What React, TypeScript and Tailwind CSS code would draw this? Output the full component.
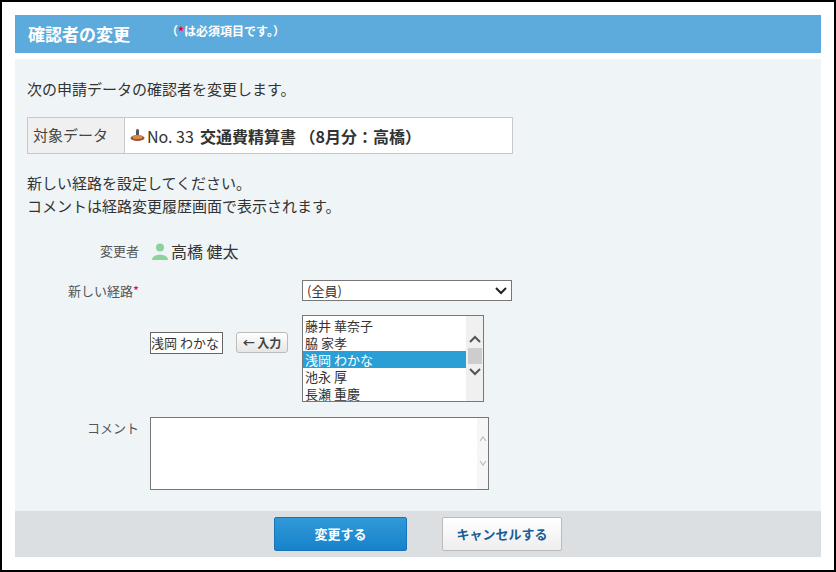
export default function App() {
  const people = ["藤井 華奈子", "脇 家孝", "浅岡 わかな", "池永 厚", "長瀬 重慶"];
  return (
    <div className="w-[836px] h-[572px] border-2 border-black bg-white relative overflow-hidden text-[#333] text-[15px]" style={{ fontFamily: '"Noto Sans CJK JP", "Noto Sans", sans-serif' }}>
      <div className="absolute left-[13px] top-[13px] w-[806px]">
        <div className="h-[38px] bg-[#5dabdc] flex items-center px-[13px] text-white">
          <span className="font-bold text-[17px]">確認者の変更</span>
          <span className="ml-[36px] text-[12px] font-bold -mt-[6px]">（<span className="text-[#e5003a]">*</span>は必須項目です。）</span>
        </div>
        <div className="mt-[6px] bg-[#eff4f7] pl-[12px] pt-[19px] h-[452px]">
          <div className="leading-[22px]">次の申請データの確認者を変更します。</div>
          <div className="mt-[17px] w-[486px] h-[37px] flex border border-[#c8c8c8] bg-white">
            <div className="w-[97px] bg-[#f0f0f0] border-r border-[#c8c8c8] flex items-center px-[5px] text-[#444]">対象データ</div>
            <div className="flex items-center pl-[4px] text-[16px]">
              <svg width="17" height="17" viewBox="0 0 17 17" className="mr-[1px]"><rect x="7" y="2" width="3" height="7" rx="1.5" fill="#555"/><ellipse cx="8.5" cy="11" rx="7" ry="3" fill="#a0522d"/><ellipse cx="8.5" cy="10" rx="5" ry="2" fill="#d98a4a"/></svg>
              No. 33 <span className="font-bold ml-[6px]">交通費精算書 （8月分：高橋）</span>
            </div>
          </div>
          <div className="mt-[17px] leading-[23px]">新しい経路を設定してください。<br />コメントは経路変更履歴画面で表示されます。</div>
          <div className="mt-[22px] flex items-center">
            <div className="w-[112px] text-right text-[13px] text-[#555]">変更者</div>
            <svg width="18" height="18" viewBox="0 0 18 18" className="ml-[12px]"><circle cx="9" cy="5.5" r="4" fill="#8fd19e"/><path d="M1 18 C1 11 17 11 17 18Z" fill="#8fd19e"/></svg>
            <span className="ml-[2px] text-[16px]">高橋 健太</span>
          </div>
          <div className="mt-[18px] flex items-start">
            <div className="w-[112px] text-right text-[13px] text-[#555] leading-[20px]">新しい経路<span className="text-[#e5003a]">*</span></div>
            <div className="ml-[163px] w-[210px] h-[21px] border border-[#777] bg-white flex items-center justify-between px-[4px] text-[13px] -mt-[1px]">
              (全員)
              <svg width="12" height="8" viewBox="0 0 12 8"><path d="M1 1l5 5 5-5" stroke="#222" strokeWidth="2" fill="none"/></svg>
            </div>
          </div>
          <div className="mt-[14px] flex">
            <div className="ml-[123px] mt-[17px] w-[73px] h-[22px] border border-[#666] bg-white text-[13px] leading-[20px] overflow-hidden whitespace-nowrap">浅岡 わかな</div>
            <div className="ml-[13px] mt-[17px] w-[52px] h-[21px] border border-[#bbb] rounded-[3px] bg-gradient-to-b from-white to-[#e6e6e6] text-[12px] font-bold text-[#444] flex items-center justify-center">← 入力</div>
            <div className="ml-[14px] w-[182px] h-[87px] border border-[#777] bg-white flex text-[13px] overflow-hidden">
              <div className="flex-1 pt-[1px]">
                {people.map((p, i) => (
                  <div key={p} className={`h-[17px] leading-[17px] px-[2px] overflow-hidden whitespace-nowrap ${i === 2 ? "bg-[#2a9fd6] text-white" : ""}`}>{p}</div>
                ))}
              </div>
              <div className="w-[17px] bg-[#f0f0f0] flex flex-col items-center">
                <svg width="12" height="10" viewBox="0 0 12 10" className="mt-[18px]"><path d="M1 8l5-5 5 5" stroke="#555" strokeWidth="2" fill="none"/></svg>
                <div className="w-[14px] h-[16px] bg-[#cdcdcd] mt-[4px]" />
                <svg width="12" height="10" viewBox="0 0 12 10" className="mt-[3px]"><path d="M1 2l5 5 5-5" stroke="#555" strokeWidth="2" fill="none"/></svg>
              </div>
            </div>
          </div>
          <div className="mt-[15px] flex">
            <div className="w-[112px] text-right text-[13px] text-[#555] pt-[1px]">コメント</div>
            <div className="ml-[11px] w-[339px] h-[73px] border border-[#777] bg-white flex justify-end">
              <div className="w-[11px] bg-[#f6f6f6] flex flex-col items-center">
                <svg width="8" height="8" viewBox="0 0 8 8" className="mt-[17px]"><path d="M1 6l3-4 3 4" stroke="#bbb" strokeWidth="1.2" fill="none"/></svg>
                <svg width="8" height="8" viewBox="0 0 8 8" className="mt-[16px]"><path d="M1 2l3 4 3-4" stroke="#bbb" strokeWidth="1.2" fill="none"/></svg>
              </div>
            </div>
          </div>
        </div>
        <div className="h-[46px] bg-[#dbdfe2] flex items-center justify-center gap-[35px]">
          <div className="w-[133px] h-[34px] rounded-[2px] border border-[#1b72b5] bg-gradient-to-b from-[#3199d8] to-[#1583cc] text-white font-bold text-[13px] flex items-center justify-center">変更する</div>
          <div className="w-[120px] h-[34px] rounded-[2px] border border-[#bbb] bg-gradient-to-b from-white to-[#eee] text-[#1a5d96] font-bold text-[13px] flex items-center justify-center">キャンセルする</div>
        </div>
      </div>
    </div>
  );
}
